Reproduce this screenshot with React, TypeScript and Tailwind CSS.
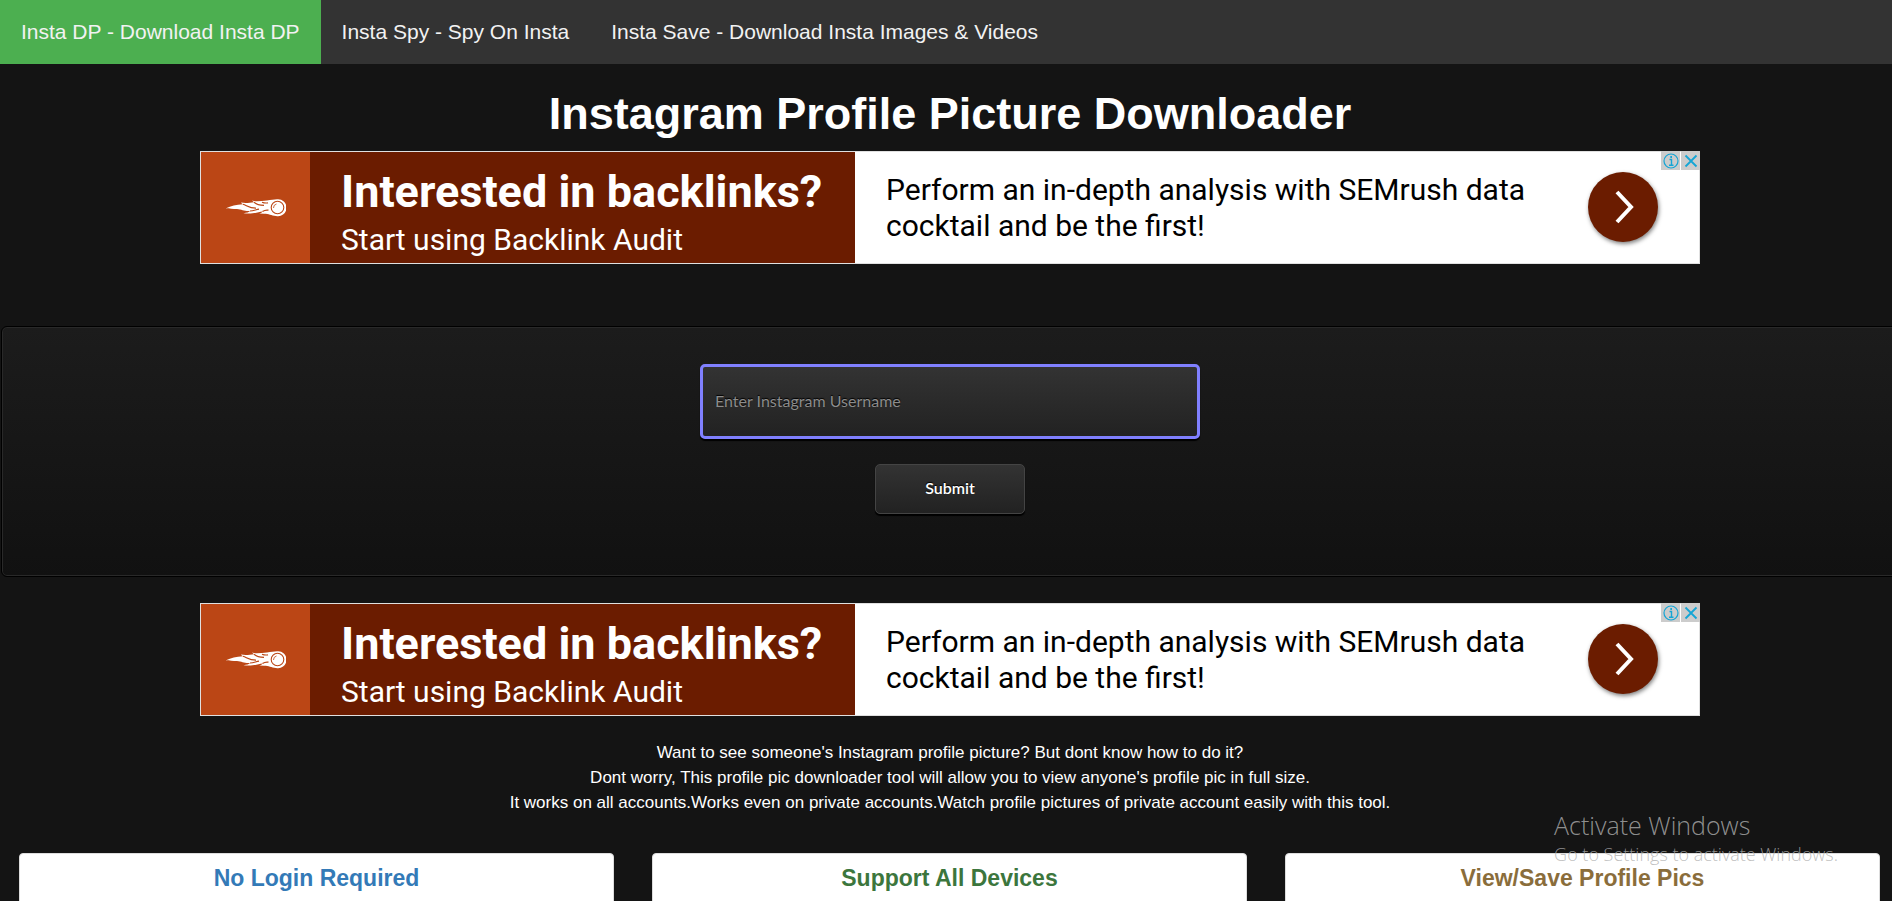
const navLinks = [
  { label: 'Insta DP - Download Insta DP', active: true },
  { label: 'Insta Spy - Spy On Insta', active: false },
  { label: 'Insta Save - Download Insta Images & Videos', active: false },
]

const features = [
  { title: 'No Login Required', color: 'text-[#337ab7]' },
  { title: 'Support All Devices', color: 'text-[#3c763d]' },
  { title: 'View/Save Profile Pics', color: 'text-[#8a6d3b]' },
]

function FireballLogo() {
  return (
    <svg viewBox="0 0 60 18" className="h-[18px] w-[60px]" aria-hidden="true">
      <path
        d="M0 9.200 C5 7 10 5.500 17 5.200 C16 4.600 15.500 4.200 15 3.500 C20 4.500 24 3.500 28 3.200 L26 1.600 C31 3 36 1.600 41 1.400 C45 1.200 48 .3 51 .3 A8.500 8.500 0 1 1 50 17 C45 16.500 43 14.800 38 14.800 L33 14.600 C35 14 36 13.500 36.500 12.500 C32 13 27 15.400 17.500 14.200 C21 13.800 23 13.200 24 12 C18 12.400 16 10.400 11 10 C7 9.700 3 10 0 9.200 Z"
        fill="#fff"
      />
      <path
        d="M17 5.200 C21 6.500 23 9.200 30 9.200 M28 3.200 C30 5.200 33 6.300 38 6.300 M36 3.200 C38 4 40 4.200 42 3.800 M24 12 C28 11.800 30 10.500 33 10.200 M36.500 12.500 C38 11.500 40 10.800 42.500 11.200"
        fill="none"
        stroke="#bb4615"
        strokeWidth="1.200"
      />
      <circle cx="51.500" cy="8.500" r="6.300" fill="#fff" stroke="#bb4615" strokeWidth="1.100" />
      <path d="M47.500 9 a4 4 0 0 1 3 -4" fill="none" stroke="#bb4615" strokeWidth=".8" />
    </svg>
  )
}

function AdBanner() {
  return (
    <aside className="relative mx-auto flex h-[113px] w-full max-w-[1500px] border border-[#e0e0e0] bg-white font-[Roboto,sans-serif]">
      <div className="flex w-[109px] shrink-0 items-center justify-center bg-[#bb4615]">
        <FireballLogo />
      </div>
      <div className="w-[545px] shrink-0 bg-[#6b1c00] pt-3 pl-[31px] whitespace-nowrap text-white">
        <p className="text-[45px] leading-[55px] font-bold">Interested in backlinks?</p>
        <p className="text-[30px] leading-[41px]">Start using Backlink Audit</p>
      </div>
      <div className="flex flex-1 items-center justify-between pr-[41px] pb-px pl-[31px]">
        <p className="w-[660px] pt-[2px] text-[30px] leading-[36px] text-black">
          Perform an in-depth analysis with SEMrush data cocktail and be the first!
        </p>
        <button
          type="button"
          aria-label="Open ad"
          className="flex size-[70px] shrink-0 items-center justify-center rounded-full bg-[#6b1c00] shadow-[1px_2px_4px_rgba(0,0,0,0.5)]"
        >
          <svg viewBox="0 0 24 34" className="h-[34px] w-6" fill="none" stroke="#fff" strokeWidth="4" aria-hidden="true">
            <path d="M6 2 L20 17 L6 32" />
          </svg>
        </button>
      </div>
      <div className="absolute -top-px -right-px flex gap-px">
        <button type="button" aria-label="Ad info" className="flex size-[19px] items-center justify-center bg-[#cccccc]">
          <svg viewBox="0 0 16 16" className="size-4" fill="none" stroke="#14a5d5" aria-hidden="true">
            <circle cx="8" cy="8" r="7" strokeWidth="1.200" />
            <path d="M6.500 6.500 H8.500 V12 M6 12.200 H10.500" strokeWidth="1.400" />
            <path d="M7.300 4 H9" strokeWidth="1.800" />
          </svg>
        </button>
        <button type="button" aria-label="Close ad" className="flex size-[19px] items-center justify-center bg-[#cccccc]">
          <svg viewBox="0 0 16 16" className="size-4" fill="none" stroke="#14a5d5" strokeWidth="1.800" aria-hidden="true">
            <path d="M2.500 2.500 L13.500 13.500 M13.500 2.500 L2.500 13.500" />
          </svg>
        </button>
      </div>
    </aside>
  )
}

function UsernameForm() {
  return (
    <form
      onSubmit={e => e.preventDefault()}
      className="mx-px mt-[62px] flex h-[251px] flex-col items-center gap-[25px] rounded-md border border-black bg-linear-to-b from-[#1c1c1c] to-[#111111] pt-[37px] font-[Lato,sans-serif] shadow-[inset_0_0_0_1px_#292929]"
    >
      <input
        type="text"
        aria-label="Instagram username"
        placeholder="Enter Instagram Username"
        className="h-[75px] w-[500px] rounded-[5px] border-[3px] border-[#8080ff] bg-linear-to-b from-[#333333] to-[#222222] px-3 pb-[2px] text-[16px] text-white shadow-[0_2px_1px_#000] outline-none [text-shadow:0_-1px_1px_#000] placeholder:text-[#8c8c8c]"
      />
      <button
        type="submit"
        className="h-[50px] w-[150px] rounded-[5px] border border-[#444444] bg-linear-to-b from-[#333333] to-[#222222] pb-[2px] text-[16px] font-semibold text-white shadow-[0_2px_1px_#000] [text-shadow:0_-1px_1px_#000]"
      >
        Submit
      </button>
    </form>
  )
}

export default function App() {
  return (
    <div className="relative h-screen overflow-hidden bg-[#141414] font-['Liberation_Sans',Arial,sans-serif]">
      {/* content runs slightly past the right edge of the window */}
      <div className="-mr-2">
        <nav className="flex bg-[#333333]">
          {navLinks.map(link => (
            <a
              key={link.label}
              href="#"
              className={`px-[21px] py-4 text-[21px] leading-[32px] whitespace-nowrap text-[#f2f2f2] ${link.active ? 'bg-[#4caf50]' : ''}`}
            >
              {link.label}
            </a>
          ))}
        </nav>

        <h1 className="mt-[25px] text-center text-[45px] leading-[50px] font-bold text-white">
          Instagram Profile Picture Downloader
        </h1>
        <div className="mt-3">
          <AdBanner />
        </div>

        <UsernameForm />

        <div className="mt-[26px]">
          <AdBanner />
        </div>

        <p className="mt-6 text-center text-[17px] leading-[25px] text-white">
          Want to see someone's Instagram profile picture? But dont know how to do it?
          <br />
          Dont worry, This profile pic downloader tool will allow you to view anyone's profile pic in full size.
          <br />
          It works on all accounts.Works even on private accounts.Watch profile pictures of private account easily with this tool.
        </p>

        <div className="mt-[38px] grid grid-cols-3 gap-[38px] pr-5 pl-[19px]">
          {features.map(f => (
            <section key={f.title} className="h-40 rounded-[4px] border border-[#dddddd] bg-white pt-[10px] text-center">
              <h2 className={`text-[23px] leading-[28px] font-bold ${f.color}`}>{f.title}</h2>
            </section>
          ))}
        </div>
      </div>

      {/* OS activation notice floating above the page */}
      <div className="pointer-events-none absolute right-[54px] bottom-[34px] font-['Open_Sans',sans-serif] text-[#b0b0b0]/80">
        <p className="text-[25px] leading-[32px] font-light">Activate Windows</p>
        <p className="text-[18px] leading-[26px] font-light">Go to Settings to activate Windows.</p>
      </div>
    </div>
  )
}
